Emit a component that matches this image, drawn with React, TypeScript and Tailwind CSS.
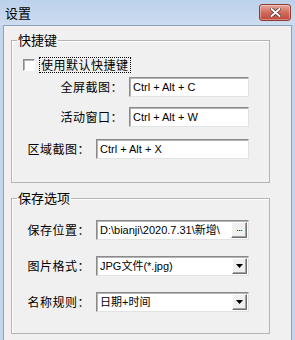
import React from "react";

const cjk = { fontFamily: '"Noto Sans CJK SC", "Liberation Sans", sans-serif' };
const field = { fontFamily: '"Liberation Sans", "Noto Sans CJK SC", sans-serif' };

function Sunken({ children, className = "" }: { children: React.ReactNode; className?: string }) {
  return (
    <div
      className={
        "flex h-[20px] items-center bg-white border border-t-[#8a8a8a] border-l-[#8a8a8a] border-r-[#e2e2e2] border-b-[#e2e2e2] shadow-[inset_1px_1px_0_#b4b4b4] " +
        className
      }
    >
      {children}
    </div>
  );
}

function Label({ children }: { children: React.ReactNode }) {
  return (
    <span className="mr-[6px] text-[12px] leading-[16px] tracking-[0.5px] text-black" style={cjk}>
      {children}
    </span>
  );
}

function TextRow({ label, value, width, mt }: { label: string; value: string; width: string; mt: string }) {
  return (
    <div className={"flex items-center justify-end pr-[20px] " + mt}>
      <Label>{label}</Label>
      <Sunken className={width}>
        <span className="pl-[3px] text-[11px] text-black whitespace-nowrap" style={field}>
          {value}
        </span>
      </Sunken>
    </div>
  );
}

function ArrowBtn() {
  return (
    <div className="ml-auto mr-[1px] flex h-[16px] w-[15px] items-center justify-center bg-[#f0f0f0] border border-t-white border-l-white border-r-[#6e6e6e] border-b-[#6e6e6e] shadow-[inset_-1px_-1px_0_#a0a0a0]">
      <svg width="7" height="4" viewBox="0 0 7 4">
        <path d="M0 0h7L3.5 4z" fill="#000" />
      </svg>
    </div>
  );
}

function SelectRow({ label, value, mt }: { label: string; value: string; mt: string }) {
  return (
    <div className={"flex items-center justify-end pr-[20px] " + mt}>
      <Label>{label}</Label>
      <Sunken className="w-[153px]">
        <span className="pl-[3px] text-[11px] text-black whitespace-nowrap" style={field}>
          {value}
        </span>
        <ArrowBtn />
      </Sunken>
    </div>
  );
}

export default function App() {
  return (
    <div className="flex h-[340px] w-[295px] flex-col overflow-hidden bg-[#c3d6ed]">
      {/* title bar */}
      <div className="flex h-[25px] items-start justify-between bg-gradient-to-b from-[#bcd1ea] to-[#cddcf0] pl-[5px] pr-[4px]">
        <span className="mt-[4px] text-[13px] leading-[17px] text-black" style={cjk}>
          设置
        </span>
        <div className="mt-[4px] flex h-[17px] w-[32px] items-center justify-center rounded-[3px] border border-[#8c3a33] bg-gradient-to-b from-[#e8a89e] via-[#d16b5d] to-[#c2473a] shadow-[inset_0_0_0_1px_rgba(255,255,255,0.35)]">
          <svg width="11" height="9" viewBox="0 0 11 9">
            <path d="M1.5 1l8 7M9.5 1l-8 7" stroke="#5a2520" strokeWidth="3.4" strokeLinecap="round" />
            <path d="M1.5 1l8 7M9.5 1l-8 7" stroke="#fff" strokeWidth="2" strokeLinecap="round" />
          </svg>
        </div>
      </div>

      {/* client area */}
      <div className="mx-[3px] flex-1 border-l border-r border-t border-[#8da2bd] bg-[#f0f0f0]">
        <fieldset className="ml-[7px] mt-[6px] w-[259px] border border-[#b4b4b4] px-0 pb-[23px] pt-0 shadow-[inset_1px_1px_0_#fff]">
          <legend className="ml-[5px] px-[1px] text-[13px] leading-[16px] text-black" style={cjk}>
            快捷键
          </legend>
          <div className="mt-[9px] flex h-[16px] items-center pl-[11px]">
            <div className="h-[12px] w-[12px] border border-t-[#8a8a8a] border-l-[#8a8a8a] border-r-white border-b-white bg-white shadow-[inset_1px_1px_0_#b4b4b4]" />
            <span
              className="ml-[5px] px-[1px] text-[12px] leading-[14px] tracking-[0.5px] text-black outline-1 outline-dotted outline-black"
              style={cjk}
            >
              使用默认快捷键
            </span>
          </div>
          <TextRow label="全屏截图：" value="Ctrl + Alt + C" width="w-[120px]" mt="mt-[4px]" />
          <TextRow label="活动窗口：" value="Ctrl + Alt + W" width="w-[120px]" mt="mt-[10px]" />
          <TextRow label="区域截图：" value="Ctrl + Alt + X" width="w-[153px]" mt="mt-[12px]" />
        </fieldset>

        <fieldset className="ml-[7px] mt-[7px] w-[259px] border border-[#b4b4b4] px-0 pb-[21px] pt-0 shadow-[inset_1px_1px_0_#fff]">
          <legend className="ml-[5px] px-[1px] text-[13px] leading-[16px] text-black" style={cjk}>
            保存选项
          </legend>
          <div className="mt-[14px] flex items-center justify-end pr-[20px]">
            <Label>保存位置：</Label>
            <Sunken className="w-[153px]">
              <span className="w-[133px] overflow-hidden pl-[3px] text-[11px] text-black whitespace-nowrap" style={field}>
                D:\bianji\2020.7.31\新增\
              </span>
              <div className="ml-auto mr-[1px] flex h-[16px] w-[16px] items-center justify-center bg-[#f0f0f0] border border-t-white border-l-white border-r-[#6e6e6e] border-b-[#6e6e6e] shadow-[inset_-1px_-1px_0_#a0a0a0]">
                <span className="text-[9px] leading-[6px] tracking-[-1px] text-black" style={field}>
                  ···
                </span>
              </div>
            </Sunken>
          </div>
          <SelectRow label="图片格式：" value="JPG文件(*.jpg)" mt="mt-[16px]" />
          <SelectRow label="名称规则：" value="日期+时间" mt="mt-[16px]" />
        </fieldset>
      </div>
    </div>
  );
}
